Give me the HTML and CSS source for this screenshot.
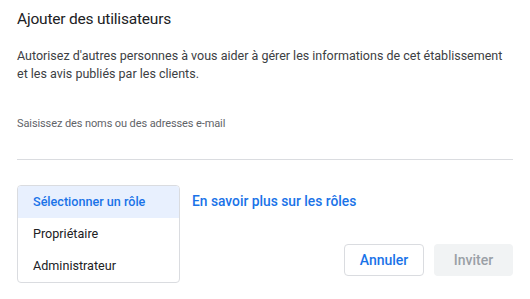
FILE: index.html
```html
<!DOCTYPE html>
<html lang="fr">
<head>
<meta charset="UTF-8">
<meta name="viewport" content="width=device-width, initial-scale=1.0">
<title>Ajouter des utilisateurs</title>
<link rel="stylesheet" href="styles.css">
</head>
<body>
<div class="dialog">
    <h1 class="title">Ajouter des utilisateurs</h1>
    <p class="desc">Autorisez d'autres personnes à vous aider à gérer les informations de cet établissement et les avis publiés par les clients.</p>

    <div class="field">
        <label for="emails">Saisissez des noms ou des adresses e-mail</label>
        <input type="text" id="emails">
    </div>

    <div class="row">
        <ul class="roles">
            <li class="active">Sélectionner un rôle</li>
            <li>Propriétaire</li>
            <li>Administrateur</li>
        </ul>
        <a class="learn" href="#">En savoir plus sur les rôles</a>
        <div class="actions">
            <button class="btn cancel">Annuler</button>
            <button class="btn invite" disabled>Inviter</button>
        </div>
    </div>
</div>
</body>
</html>
```

FILE: styles.css
```css
body {
    margin: 0;
    font-family: Roboto, Arial, sans-serif;
    background: #fff;
    color: #202124;
}

.dialog {
    padding: 7px 17px 0 17px;
}

.title {
    margin: 0;
    font-size: 15.5px;
    font-weight: 400;
    line-height: 24px;
    letter-spacing: -0.2px;
    color: #202124;
}

.desc {
    margin: 16px 0 0 0;
    font-size: 12.5px;
    line-height: 18px;
    color: #3c4043;
}

.field {
    margin-top: 33px;
}

.field label {
    display: block;
    font-size: 11px;
    line-height: 16px;
    letter-spacing: -0.1px;
    color: #5f6368;
}

.field input {
    display: block;
    width: 100%;
    box-sizing: border-box;
    height: 28px;
    border: none;
    border-bottom: 1px solid #dadce0;
    outline: none;
    padding: 0;
    font: inherit;
}

.row {
    display: grid;
    grid-template-columns: auto 1fr;
    column-gap: 12px;
    align-items: start;
    margin-top: 25px;
}

.roles {
    grid-column: 1;
    grid-row: 1;
    list-style: none;
    margin: 0;
    padding: 0;
    width: 161px;
    border: 1px solid #dadce0;
    border-radius: 4px;
    overflow: hidden;
}

.roles li {
    height: 32px;
    line-height: 32px;
    padding-left: 15px;
    font-size: 12.6px;
    color: #202124;
}

.roles li.active {
    background: #e8f0fe;
    color: #1a73e8;
    font-weight: 500;
}

.learn {
    grid-column: 2;
    grid-row: 1;
    justify-self: start;
    line-height: 32px;
    font-size: 13.8px;
    font-weight: 500;
    color: #1a73e8;
    text-decoration: none;
    white-space: nowrap;
}

.actions {
    grid-column: 2;
    grid-row: 1;
    justify-self: end;
    margin-top: 59px;
    display: flex;
    gap: 10px;
}

.btn {
    height: 32px;
    border-radius: 4px;
    font-family: Roboto, Arial, sans-serif;
    font-size: 14px;
    font-weight: 500;
    cursor: pointer;
}

.cancel {
    width: 80px;
    background: #fff;
    border: 1px solid #dadce0;
    color: #1a73e8;
}

.invite {
    width: 79px;
    background: #f1f3f4;
    border: none;
    color: #9aa0a6;
}
```
